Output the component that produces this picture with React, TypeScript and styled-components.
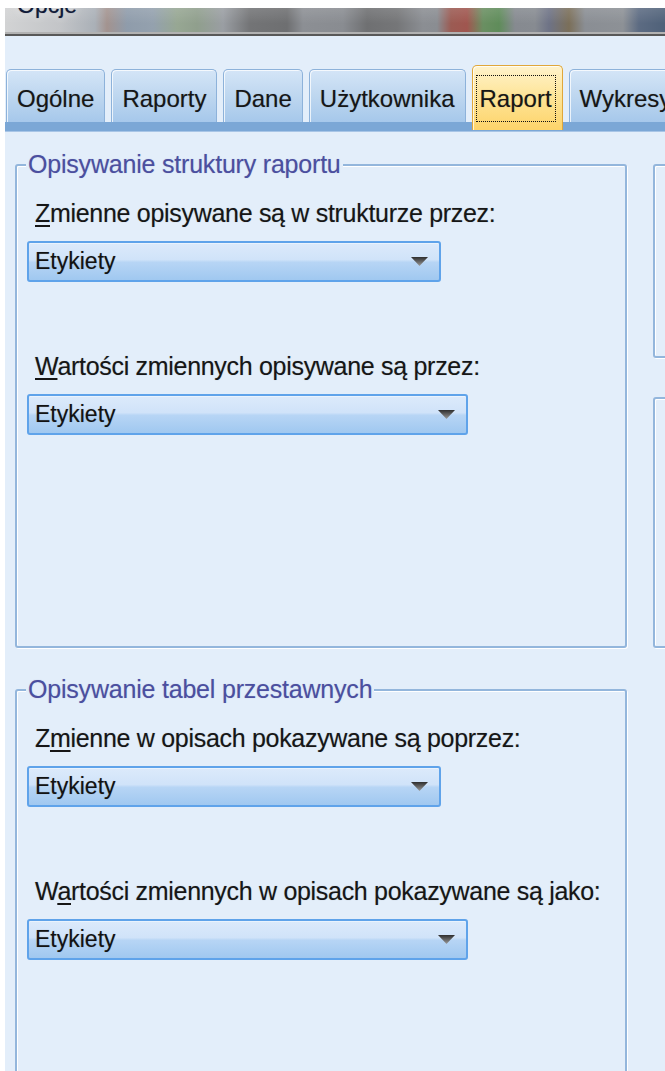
import React from "react";
import styled, { createGlobalStyle } from "styled-components";

const GlobalStyle = createGlobalStyle`
  html, body {
    margin: 0;
    padding: 0;
    background: #ffffff;
  }
  body {
    font-family: "Liberation Sans", Arial, sans-serif;
    overflow: hidden;
  }
`;

const Screen = styled.div`
  width: 665px;
  height: 1071px;
  box-sizing: border-box;
  padding: 8px 0 0 5px;
  overflow: hidden;
`;

const Dialog = styled.div`
  height: 100%;
  background: #e3eefa;
  overflow: hidden;
`;

// blurred aero glass behind the caption
const TitleBar = styled.div`
  height: 26px;
  padding-left: 12px;
  overflow: hidden;
  border-bottom: 2px solid #585858;
  box-shadow: inset 0 -2px 0 #b2b2b2;
  background:
    linear-gradient(180deg, rgba(255, 255, 255, 0.12), rgba(0, 0, 0, 0) 60%),
    linear-gradient(
      90deg,
      #d2d3d4 0px,
      #c3c5c8 55px,
      #aab0b7 90px,
      #a3938f 102px,
      #8f9cab 122px,
      #94a1ae 148px,
      #97a793 172px,
      #909f8d 192px,
      #9a9ea3 218px,
      #737476 245px,
      #6e6f71 282px,
      #8c8f94 298px,
      #898c91 338px,
      #6f7072 362px,
      #757678 392px,
      #8b8e93 418px,
      #8a8d92 432px,
      #9b5b53 446px,
      #a0564f 462px,
      #6a8f62 478px,
      #5f8c5a 494px,
      #868a90 510px,
      #878b91 530px,
      #6e7386 544px,
      #7b6f59 564px,
      #8a8e94 580px,
      #8d9196 618px,
      #5c6b82 634px,
      #4f6179 660px
    );
`;

const Caption = styled.div`
  margin-top: -14px;
  font-size: 23px;
  line-height: 23px;
  color: #101a38;
  text-shadow: 0 0 1px rgba(16, 26, 56, 0.5), 0 0 8px rgba(255, 255, 255, 0.7);
`;

const TabStrip = styled.div`
  display: flex;
  align-items: flex-end;
  gap: 6px;
  padding: 29px 0 0 1px;
`;

const Tab = styled.div<{ $active?: boolean }>`
  flex: none;
  position: relative;
  font-size: 24px;
  line-height: 28px;
  color: #161616;
  white-space: nowrap;
  text-shadow: 0 0 1px rgba(0, 0, 0, 0.3);
  border: 1px solid ${(p) => (p.$active ? "#e0a73a" : "#8db2da")};
  border-bottom: none;
  border-radius: 5px 5px 0 0;
  padding: ${(p) => (p.$active ? "9px 6px 8px 3px" : "15px 10px 9px")};
  margin-bottom: ${(p) => (p.$active ? "-8px" : "0")};
  z-index: ${(p) => (p.$active ? 1 : 0)};
  background: ${(p) =>
    p.$active
      ? "linear-gradient(180deg, #fff3cc 0%, #fee59a 45%, #fdd46a 100%)"
      : "linear-gradient(180deg, #d4e5f7 0%, #c0d8f0 45%, #a6c8eb 100%)"};
  box-shadow: inset 1px 1px 0 rgba(255, 255, 255, 0.75);
`;

const FocusRing = styled.span`
  display: block;
  padding: 9px 3px 8px;
  border: 1px dotted #111111;
`;

const TabBand = styled.div`
  height: 10px;
  background: #7ba7d6;
  box-shadow: inset 0 -1px 0 #a8c5e6;
`;

const Panel = styled.div`
  padding: 32px 0 0 10px;
`;

const TopRow = styled.div`
  display: flex;
  gap: 26px;
  height: 484px;
`;

const GroupBox = styled.div<{ $height?: number }>`
  flex: none;
  width: 612px;
  height: ${(p) => (p.$height ? `${p.$height}px` : "auto")};
  box-sizing: border-box;
  display: flex;
  flex-direction: column;
  align-items: flex-start;
  padding: 0 10px;
  border: 2px solid #93b6dc;
  border-radius: 3px;
  box-shadow: inset 1px 1px 0 #ffffff, 1px 1px 0 #ffffff;
`;

const GroupTitle = styled.div`
  margin: -16px 0 0 -1px;
  padding: 0 2px;
  background: #e3eefa;
  font-size: 25px;
  line-height: 28px;
  letter-spacing: -0.2px;
  color: #4b4f9f;
  text-shadow: 0 0 1px rgba(75, 79, 159, 0.35);
  white-space: nowrap;
`;

const FieldLabel = styled.div<{ $gap: number }>`
  margin: ${(p) => p.$gap}px 0 0 8px;
  font-size: 25px;
  line-height: 28px;
  letter-spacing: -0.3px;
  color: #161616;
  text-shadow: 0 0 1px rgba(0, 0, 0, 0.3);
  white-space: nowrap;
`;

const AccessKey = styled.span`
  text-decoration: underline;
  text-underline-offset: 3px;
`;

const Combo = styled.div<{ $width: number }>`
  width: ${(p) => p.$width}px;
  height: 41px;
  box-sizing: border-box;
  margin-top: 14px;
  display: flex;
  align-items: center;
  justify-content: space-between;
  padding: 0 11px 0 6px;
  border: 2px solid #5fa3ea;
  border-radius: 3px;
  box-shadow: inset 0 1px 0 #eaf3fd;
  background: linear-gradient(
    180deg,
    #dceafb 0%,
    #d0e3f9 45%,
    #b7d5f5 52%,
    #a0c8f0 100%
  );
  font-size: 23px;
  color: #121212;
  text-shadow: 0 0 1px rgba(0, 0, 0, 0.3);
`;

const SideColumn = styled.div`
  flex: none;
  width: 120px;
  display: flex;
  flex-direction: column;
  gap: 39px;
`;

const SideBox = styled.div<{ $height?: number }>`
  flex: ${(p) => (p.$height ? "none" : "1")};
  height: ${(p) => (p.$height ? `${p.$height}px` : "auto")};
  box-sizing: border-box;
  border: 2px solid #93b6dc;
  border-radius: 3px;
  box-shadow: inset 1px 1px 0 #ffffff, 1px 1px 0 #ffffff;
`;

const LowerGroup = styled.div`
  margin-top: 41px;
`;

const ComboArrow = () => (
  <svg width="17" height="9" viewBox="0 0 17 9">
    <defs>
      <linearGradient id="comboArrowFill" x1="0" y1="0" x2="0" y2="1">
        <stop offset="0" stopColor="#2e2e2e" />
        <stop offset="1" stopColor="#9a9a9a" />
      </linearGradient>
    </defs>
    <path d="M0 0H17L8.5 9Z" fill="url(#comboArrowFill)" />
  </svg>
);

interface FieldProps {
  before: string;
  hotkey: string;
  after: string;
  gap: number;
  width: number;
  value: string;
}

const Field = ({ before, hotkey, after, gap, width, value }: FieldProps) => (
  <>
    <FieldLabel $gap={gap}>
      {before}
      <AccessKey>{hotkey}</AccessKey>
      {after}
    </FieldLabel>
    <Combo $width={width}>
      <span>{value}</span>
      <ComboArrow />
    </Combo>
  </>
);

const tabs = ["Ogólne", "Raporty", "Dane", "Użytkownika", "Raport", "Wykresy"];

export default function App() {
  const activeTab = "Raport";

  return (
    <>
      <GlobalStyle />
      <Screen>
        <Dialog>
          <TitleBar>
            <Caption>Opcje</Caption>
          </TitleBar>

          <TabStrip>
            {tabs.map((t) =>
              t === activeTab ? (
                <Tab key={t} $active>
                  <FocusRing>{t}</FocusRing>
                </Tab>
              ) : (
                <Tab key={t}>{t}</Tab>
              )
            )}
          </TabStrip>
          <TabBand />

          <Panel>
            <TopRow>
              <GroupBox>
                <GroupTitle>Opisywanie struktury raportu</GroupTitle>
                <Field
                  before=""
                  hotkey="Z"
                  after="mienne opisywane są w strukturze przez:"
                  gap={21}
                  width={414}
                  value="Etykiety"
                />
                <Field
                  before=""
                  hotkey="W"
                  after="artości zmiennych opisywane są przez:"
                  gap={70}
                  width={441}
                  value="Etykiety"
                />
              </GroupBox>

              <SideColumn>
                <SideBox $height={194} />
                <SideBox />
              </SideColumn>
            </TopRow>

            <LowerGroup>
              <GroupBox $height={480}>
                <GroupTitle>Opisywanie tabel przestawnych</GroupTitle>
                <Field
                  before="Z"
                  hotkey="m"
                  after="ienne w opisach pokazywane są poprzez:"
                  gap={21}
                  width={414}
                  value="Etykiety"
                />
                <Field
                  before="W"
                  hotkey="a"
                  after="rtości zmiennych w opisach pokazywane są jako:"
                  gap={70}
                  width={441}
                  value="Etykiety"
                />
              </GroupBox>
            </LowerGroup>
          </Panel>
        </Dialog>
      </Screen>
    </>
  );
}
